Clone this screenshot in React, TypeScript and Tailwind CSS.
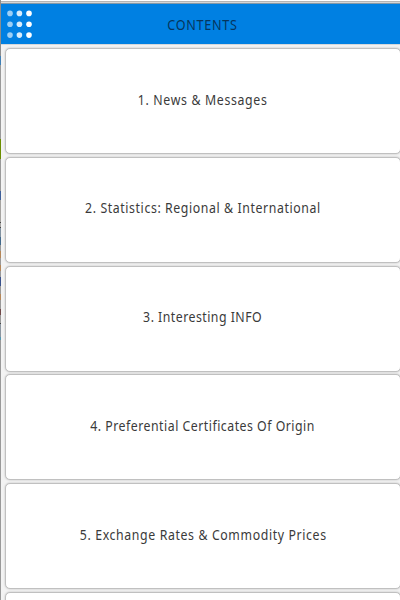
const sections = [
  { title: "1. News & Messages", fit: "tracking-[0.74px]" },
  { title: "2. Statistics: Regional & International", fit: "tracking-[0.67px]" },
  { title: "3. Interesting INFO", fit: "tracking-[0.54px]" },
  { title: "4. Preferential Certificates Of Origin", fit: "tracking-[0.56px]" },
  { title: "5. Exchange Rates & Commodity Prices", fit: "tracking-[0.7px]" },
];

// Slices of the page that stay visible along the left edge
const edgeSlices = [
  "h-[56px] bg-[#8d8d8d]",
  "h-[9px] bg-[#3f7fb5]",
  "h-[74px] bg-[#999999]",
  "h-[20px] bg-[#6b8e00]",
  "h-[32px] bg-[#999999]",
  "h-[9px] bg-[#3d5f99]",
  "h-[22px] bg-[#a5a3a0]",
  "h-[1px] bg-[#444444]",
  "h-[4px] bg-[#a5a3a0]",
  "h-[1px] bg-[#444444]",
  "h-[9px] bg-[#8292a0]",
  "h-[8px] bg-[#42698b]",
  "h-[6px] bg-[#999999]",
  "h-[7px] bg-[#b48658]",
  "h-[7px] bg-[#999999]",
  "h-[6px] bg-[#b48658]",
  "h-[6px] bg-[#999999]",
  "h-[9px] bg-[#39518b]",
  "h-[8px] bg-[#999999]",
  "h-[6px] bg-[#b48658]",
  "h-[9px] bg-[#999999]",
  "h-[6px] bg-[#704848]",
  "h-[8px] bg-[#999999]",
  "h-[1px] bg-[#444444]",
  "h-[13px] bg-[#8c96a0]",
  "h-[3px] bg-[#5297b0]",
  "h-[260px] bg-[#999999]",
];

// Dots brighten from left to right
const dotColumns = [
  { x: 3, color: "fill-[#9dcff5]" },
  { x: 12.4, color: "fill-[#d9edfc]" },
  { x: 22, color: "fill-white" },
];

function DotGrid() {
  return (
    <svg className="ml-[6px] mt-[6px] h-[28px] w-[25px]" viewBox="0 0 25 28">
      {dotColumns.map(({ x, color }) =>
        [3.4, 14.3, 25.1].map((y) => <circle key={`${x}-${y}`} cx={x} cy={y} r="2.8" className={color} />)
      )}
    </svg>
  );
}

function SectionCard({ title, fit }: { title: string; fit: string }) {
  return (
    <button className="flex h-[106px] w-[396px] shrink-0 items-center justify-center rounded-[5px] border border-[#c0c0c0] bg-white pb-[4px] shadow-[0_0_2px_#b8b8b8]">
      <span className={`scale-x-[0.88] whitespace-nowrap text-[14px] text-[#3a3a3a] ${fit}`}>{title}</span>
    </button>
  );
}

export default function App() {
  return (
    <div className="flex h-[600px] w-[400px] overflow-hidden bg-[#f3f3f3] font-['Noto_Sans','Open_Sans',sans-serif]">
      <div className="flex w-px shrink-0 flex-col">
        {edgeSlices.map((slice, i) => (
          <div key={i} className={`shrink-0 ${slice}`} />
        ))}
      </div>

      <div className="flex w-[399px] shrink-0 flex-col">
        <div className="h-[4px] shrink-0 border-b border-[#8298a8] bg-[#d6d6d6]">
          <div className="h-[2px] border-b border-[#b5b5b5] bg-white" />
        </div>
        <header className="grid h-[40px] shrink-0 grid-cols-[32px_1fr_28px] bg-[#0080e2]">
          <DotGrid />
          <h1 className="scale-x-[0.9] text-center text-[14px] leading-[41px] tracking-[0.8px] text-[#06355d]">
            CONTENTS
          </h1>
        </header>

        <main className="flex flex-col gap-[2.8px] border-t border-[#d5d8db] pl-[4px] pt-[3px]">
          {sections.map((section) => (
            <SectionCard key={section.title} {...section} />
          ))}
          <div className="h-[106px] w-[396px] shrink-0 rounded-[5px] border border-[#c0c0c0] bg-white shadow-[0_0_2px_#b8b8b8]" />
        </main>
      </div>
    </div>
  );
}
